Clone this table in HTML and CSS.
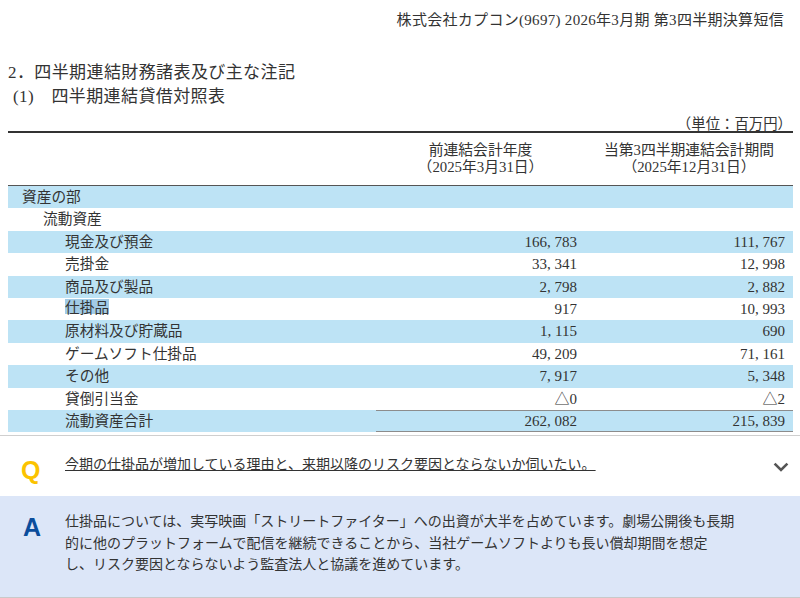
FILE: index.html
```html
<!DOCTYPE html>
<html lang="ja">
<head>
<meta charset="utf-8">
<title>四半期連結貸借対照表</title>
<link rel="stylesheet" href="styles.css">
</head>
<body>
<div class="doc">
  <div class="doc-header">株式会社カプコン(9697) 2026年3月期 第3四半期決算短信</div>
  <h2 class="doc-title">2．四半期連結財務諸表及び主な注記</h2>
  <h3 class="doc-subtitle">(1)　四半期連結貸借対照表</h3>
  <div class="unit">（単位：百万円）</div>
  <table class="bs">
    <colgroup>
      <col class="c-label">
      <col class="c-val">
      <col class="c-val2">
    </colgroup>
    <thead>
      <tr>
        <th></th>
        <th>前連結会計年度<br>（2025年3月31日）</th>
        <th>当第3四半期連結会計期間<br>（2025年12月31日）</th>
      </tr>
    </thead>
    <tbody>
      <tr class="band"><td class="lbl l1">資産の部</td><td class="num"></td><td class="num"></td></tr>
      <tr><td class="lbl l2">流動資産</td><td class="num"></td><td class="num"></td></tr>
      <tr class="band"><td class="lbl l3">現金及び預金</td><td class="num">166, 783</td><td class="num">111, 767</td></tr>
      <tr><td class="lbl l3">売掛金</td><td class="num">33, 341</td><td class="num">12, 998</td></tr>
      <tr class="band"><td class="lbl l3">商品及び製品</td><td class="num">2, 798</td><td class="num">2, 882</td></tr>
      <tr><td class="lbl l3"><span class="hl">仕掛品</span></td><td class="num">917</td><td class="num">10, 993</td></tr>
      <tr class="band"><td class="lbl l3">原材料及び貯蔵品</td><td class="num">1, 115</td><td class="num">690</td></tr>
      <tr><td class="lbl l3">ゲームソフト仕掛品</td><td class="num">49, 209</td><td class="num">71, 161</td></tr>
      <tr class="band"><td class="lbl l3">その他</td><td class="num">7, 917</td><td class="num">5, 348</td></tr>
      <tr><td class="lbl l3">貸倒引当金</td><td class="num">△0</td><td class="num">△2</td></tr>
      <tr class="band total"><td class="lbl l3">流動資産合計</td><td class="num">262, 082</td><td class="num">215, 839</td></tr>
    </tbody>
  </table>
</div>
<section class="qa">
  <div class="q">
    <span class="q-mark">Q</span>
    <p class="q-text">今期の仕掛品が増加している理由と、来期以降のリスク要因とならないか伺いたい。</p>
    <svg class="chev" width="16" height="10" viewBox="0 0 16 10" aria-hidden="true"><polyline points="1.6,1.6 8,8 14.4,1.6" fill="none" stroke="#555" stroke-width="2.6"/></svg>
  </div>
  <div class="a">
    <span class="a-mark">A</span>
    <p class="a-text">仕掛品については、実写映画「ストリートファイター」への出資が大半を占めています。劇場公開後も長期<br>的に他のプラットフォームで配信を継続できることから、当社ゲームソフトよりも長い償却期間を想定<br>し、リスク要因とならないよう監査法人と協議を進めています。</p>
  </div>
</section>
</body>
</html>
```

FILE: styles.css
```css
html, body {
  margin: 0;
  padding: 0;
  background: #ffffff;
}

.doc {
  padding: 0 7px 0 8px;
  font-family: "Liberation Serif", "Noto Sans CJK JP", serif;
  color: #333333;
}

.doc-header {
  text-align: right;
  font-size: 15px;
  line-height: 20px;
  letter-spacing: 0.3px;
  padding: 10px 9px 0 0;
}

.doc-title {
  margin: 31px 0 0;
  font-size: 17px;
  font-weight: normal;
  line-height: 24px;
  letter-spacing: 0.4px;
}

.doc-subtitle {
  margin: 0;
  padding-left: 5px;
  font-size: 17px;
  font-weight: normal;
  line-height: 24px;
  letter-spacing: 0.4px;
}

.unit {
  margin-top: 6px;
  text-align: right;
  font-family: "Noto Sans CJK JP", sans-serif;
  font-size: 14.4px;
  line-height: 16px;
  padding-right: 1px;
}

.bs {
  width: 785px;
  table-layout: fixed;
  border-collapse: separate;
  border-spacing: 0;
  border-top: 2px solid #333333;
  margin-bottom: 2.6px;
}

.c-label { width: 368px; }
.c-val { width: 209px; }
.c-val2 { width: 208px; }

.bs th {
  padding: 8.5px 0 9.5px;
  font-family: "Liberation Serif", "Noto Sans CJK JP", serif;
  font-size: 14.8px;
  font-weight: normal;
  line-height: 17px;
  text-align: center;
  vertical-align: middle;
  border-bottom: 1px solid #555555;
}

.bs td {
  height: 22.4px;
  padding: 0;
  box-sizing: border-box;
  line-height: 22.4px;
  white-space: nowrap;
}

.bs .band {
  background: #bde3f5;
}

.bs td.lbl {
  font-family: "Noto Sans CJK JP", sans-serif;
  font-size: 14.7px;
  line-height: 20.4px;
  padding-bottom: 2px;
}

.bs td.l1 { padding-left: 14px; }
.bs td.l2 { padding-left: 35px; }
.bs td.l3 { padding-left: 57px; }

.bs td.num {
  font-family: "Liberation Serif", "Noto Sans CJK JP", serif;
  font-size: 15px;
  text-align: right;
  padding-right: 8px;
}

.hl {
  display: inline-block;
  line-height: 15px;
  vertical-align: 1px;
  background: #a2cbe6;
}

.total .num {
  box-shadow: inset 0 1px 0 #8c8c8c, inset 0 -1px 0 #8c8c8c;
}

.qa {
  border-top: 1px solid #cfcfcf;
  font-family: "Noto Sans CJK JP", sans-serif;
  color: #333333;
}

.q {
  display: flex;
  align-items: flex-start;
  height: 60px;
  box-sizing: border-box;
  padding: 17px 11px 0 21px;
}

.q-mark {
  flex: none;
  width: 44px;
  margin-top: 4.7px;
  font-family: "Liberation Sans", Arial, sans-serif;
  font-weight: bold;
  font-size: 25px;
  line-height: 25px;
  color: #fbc300;
}

.q-text {
  margin: 0;
  font-size: 14px;
  line-height: 21.5px;
  text-decoration: underline;
  text-underline-offset: 1px;
}

.chev {
  flex: none;
  margin-left: auto;
  margin-top: 9px;
}

.a {
  display: flex;
  align-items: flex-start;
  background: #dce6f8;
  padding: 14.25px 0 22.25px 23px;
  border-bottom: 1px solid #c9c9c9;
}

.a-mark {
  flex: none;
  width: 42px;
  margin-top: 4.45px;
  font-family: "Liberation Sans", Arial, sans-serif;
  font-weight: bold;
  font-size: 25px;
  line-height: 25px;
  color: #0b4d9c;
}

.a-text {
  margin: 0;
  font-size: 14px;
  line-height: 21.5px;
}
```
